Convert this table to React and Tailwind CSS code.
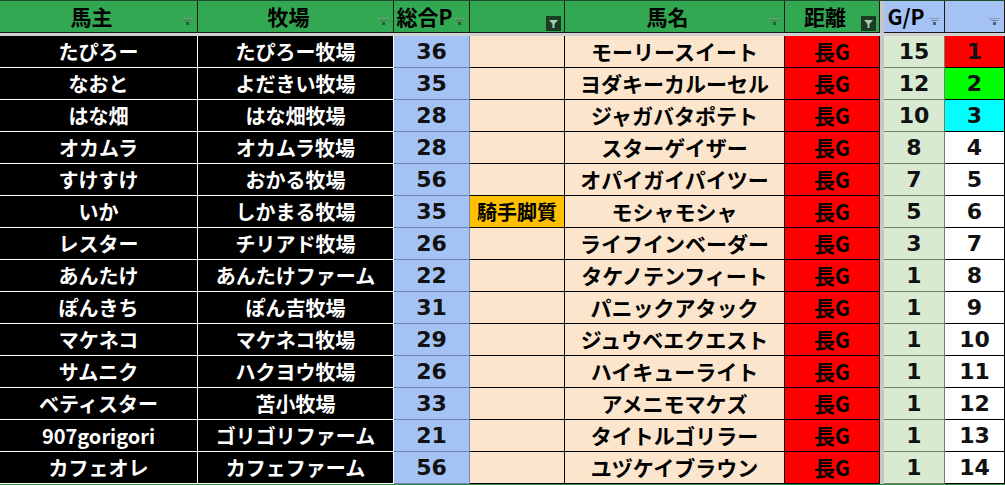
const ROWS = [
  ['たぴろー', 'たぴろー牧場', 36, '', 'モーリースイート', '長G', 15, 1],
  ['なおと', 'よだきい牧場', 35, '', 'ヨダキーカルーセル', '長G', 12, 2],
  ['はな畑', 'はな畑牧場', 28, '', 'ジャガバタポテト', '長G', 10, 3],
  ['オカムラ', 'オカムラ牧場', 28, '', 'スターゲイザー', '長G', 8, 4],
  ['すけすけ', 'おかる牧場', 56, '', 'オパイガイパイツー', '長G', 7, 5],
  ['いか', 'しかまる牧場', 35, '騎手脚質', 'モシャモシャ', '長G', 5, 6],
  ['レスター', 'チリアド牧場', 26, '', 'ライフインベーダー', '長G', 3, 7],
  ['あんたけ', 'あんたけファーム', 22, '', 'タケノテンフィート', '長G', 1, 8],
  ['ぽんきち', 'ぽん吉牧場', 31, '', 'パニックアタック', '長G', 1, 9],
  ['マケネコ', 'マケネコ牧場', 29, '', 'ジュウベエクエスト', '長G', 1, 10],
  ['サムニク', 'ハクヨウ牧場', 26, '', 'ハイキューライト', '長G', 1, 11],
  ['ベティスター', '苫小牧場', 33, '', 'アメニモマケズ', '長G', 1, 12],
  ['907gorigori', 'ゴリゴリファーム', 21, '', 'タイトルゴリラー', '長G', 1, 13],
  ['カフェオレ', 'カフェファーム', 56, '', 'ユヅケイブラウン', '長G', 1, 14],
];

const RANK_BG = {
  1: 'bg-[#ff0000]',
  2: 'bg-[#00ff00]',
  3: 'bg-[#00ffff]',
};

const NUM_FONT = { fontFamily: '"DejaVu Sans", "Noto Sans", sans-serif' };

// small grey dropdown marker in the header cells
const DropMark = ({ blue }) => (
  <svg width="11" height="8" viewBox="0 0 11 8" className="absolute right-[4px] bottom-[6px]">
    <rect x="0" y="0" width="11" height="1" fill={blue ? '#8a9ab0' : '#6f9a78'} />
    <rect x="2" y="2" width="7" height="1" fill={blue ? '#6f7f95' : '#4f7a58'} />
    <rect x="4" y="4" width="3" height="3" fill={blue ? '#4f5f75' : '#2f5a38'} />
  </svg>
);

// active filter button
const FilterOn = () => (
  <svg width="15" height="15" viewBox="0 0 15 15" className="absolute right-[3px] bottom-[1px]">
    <rect x="0" y="0" width="15" height="15" fill="#1c3a24" />
    <path d="M3 4 H12 L8.5 8 V12 H6.5 V8 Z" fill="#9fd4a8" />
  </svg>
);

const Head = ({ children, blue, filter, className = '' }) => (
  <div
    className={`relative flex items-center justify-center h-[32px] border-r border-b border-[#1b1b1b] pr-[14px] text-[21px] font-bold text-black ${
      blue ? 'bg-[#a4c2f4]' : 'bg-[#33a852]'
    } ${className}`}
  >
    {children}
    {filter ? <FilterOn /> : <DropMark blue={blue} />}
  </div>
);

const Cell = ({ children, className = '', style }) => (
  <div className={`flex items-center justify-center h-[32px] border-r border-b font-bold ${className}`} style={style}>
    {children}
  </div>
);

export default function App() {
  return (
    <div
      className="w-[1005px] h-[485px] overflow-hidden bg-white"
      style={{ fontFamily: '"Noto Sans CJK JP", "Noto Sans", sans-serif' }}
    >
      <div className="grid grid-cols-[198px_196px_76px_95px_220px_95px_4px_61px_60px] border-t border-[#1b4d2a]">
        <Head>馬主</Head>
        <Head>牧場</Head>
        <Head className="pr-[12px]">総合P</Head>
        <Head filter />
        <Head>馬名</Head>
        <Head filter>距離</Head>
        <div className="bg-[#c6c6c6]" />
        <Head blue className="pr-[16px]">G/P</Head>
        <Head blue />

        <div className="col-span-9 h-[3px] bg-[#d0d0d0]" />

        {ROWS.map((r, i) => (
          <div key={i} className="contents">
            <Cell className="bg-black border-white text-white text-[20px]">{r[0]}</Cell>
            <Cell className="bg-black border-white text-white text-[20px]">{r[1]}</Cell>
            <Cell className="bg-[#a4c2f4] border-[#6f86ad] text-[#111] text-[22px]" style={NUM_FONT}>
              {r[2]}
            </Cell>
            <Cell className={`border-black text-black text-[20px] ${r[3] ? 'bg-[#ffc000]' : 'bg-[#fce5cd]'}`}>
              {r[3]}
            </Cell>
            <Cell className="bg-[#fce5cd] border-black text-black text-[21px]">{r[4]}</Cell>
            <Cell className="bg-[#ff0000] border-black text-black text-[21px]">{r[5]}</Cell>
            <div className="bg-[#c6c6c6]" />
            <Cell className="bg-[#d9ead3] border-[#6f7f6a] text-[#111] text-[22px]" style={NUM_FONT}>
              {r[6]}
            </Cell>
            <Cell
              className={`border-black text-[#111] text-[22px] ${RANK_BG[r[7]] || 'bg-white'}`}
              style={NUM_FONT}
            >
              {r[7]}
            </Cell>
          </div>
        ))}
      </div>
      <div className="h-[2px] bg-[#2f8a46]" />
    </div>
  );
}
